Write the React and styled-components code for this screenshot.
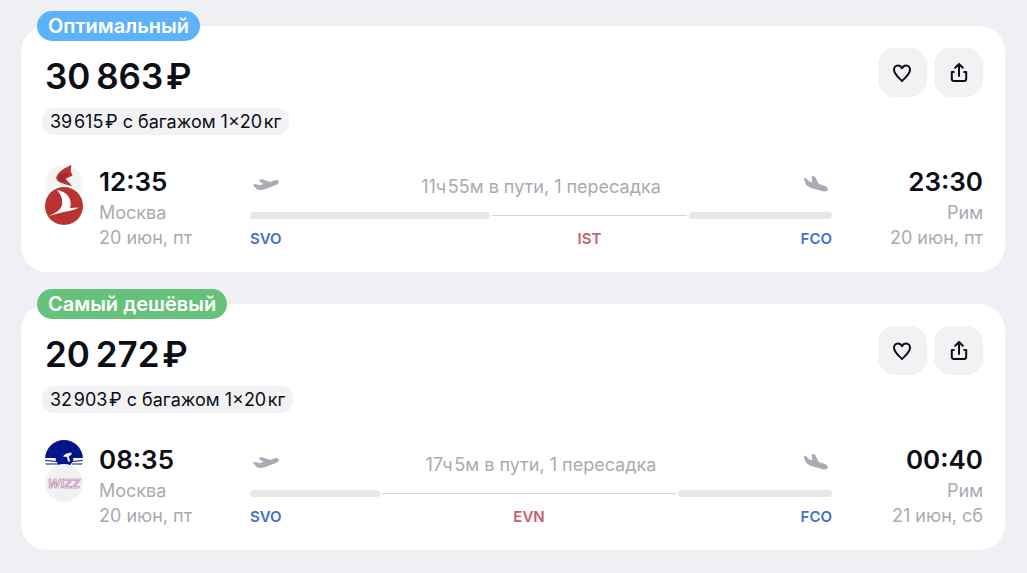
import React, { useState } from 'react';
import styled, { createGlobalStyle, ThemeProvider } from 'styled-components';

const theme = {
  colors: {
    page: '#eff0f4',
    card: '#ffffff',
    black: '#0c0e16',
    gray: '#a8abb2',
    icon: '#a9acb5',
    soft: '#f2f2f4',
    bar: '#e6e8e8',
    line: '#d3d5d7',
    blue: '#446fd0',
    red: '#c5616d',
  },
};

const GlobalStyle = createGlobalStyle`
  * {
    box-sizing: border-box;
  }
  body {
    margin: 0;
    background: ${theme.colors.page};
    color: ${theme.colors.black};
    font-family: Inter, 'Noto Sans', sans-serif;
  }
`;

const TicketList = styled.main`
  display: flex;
  flex-direction: column;
  gap: 32px;
  padding: 26px 22px 23px 21px;
`;

const Card = styled.article`
  position: relative;
  padding: 22px 22px 22px 21px;
  border-radius: 26px;
  background: ${(props) => props.theme.colors.card};
`;

const Badge = styled.span`
  position: absolute;
  top: -15px;
  left: 16px;
  padding: 0 11px;
  border-radius: 15px;
  background: ${({ $color }) => $color};
  color: ${(props) => props.theme.colors.card};
  font-size: 20px;
  font-weight: 600;
  line-height: 30px;
`;

const Header = styled.header`
  display: flex;
  justify-content: space-between;
  align-items: flex-start;
`;

const Price = styled.h2`
  margin: 6px 0 10px;
  padding-left: 3px;
  font-size: 35px;
  font-weight: 600;
  line-height: 44px;
`;

const Baggage = styled.p`
  width: fit-content;
  margin: 0;
  padding: 0 8px;
  border-radius: 12px;
  background: ${(props) => props.theme.colors.soft};
  font-size: 18px;
  line-height: 27px;
`;

const Actions = styled.div`
  display: flex;
  gap: 7px;
`;

const ActionButton = styled.button`
  display: flex;
  align-items: center;
  justify-content: center;
  width: 49px;
  height: 49px;
  padding: 0;
  border: none;
  border-radius: 17px;
  background: ${(props) => props.theme.colors.soft};
  color: ${(props) => props.theme.colors.black};
  cursor: pointer;
`;

const Flight = styled.div`
  display: grid;
  grid-template-columns: 38px 135px 1fr 135px;
  column-gap: 16px;
  align-items: start;
  margin-top: 27px;
  padding-left: 3px;
`;

const Point = styled.div`
  color: ${(props) => props.theme.colors.gray};
  font-size: 18px;
  line-height: 25px;
  text-align: ${({ $align }) => $align || 'left'};
`;

const Time = styled.div`
  margin: 4px 0 2px;
  color: ${(props) => props.theme.colors.black};
  font-size: 26px;
  font-weight: 600;
  line-height: 32px;
`;

const Route = styled.div`
  padding-top: 13px;
`;

const RouteTop = styled.div`
  display: flex;
  justify-content: space-between;
  padding: 0 3px;
  color: ${(props) => props.theme.colors.gray};
  font-size: 18px;
  line-height: 24px;

  svg {
    color: ${(props) => props.theme.colors.icon};
  }
`;

const Segments = styled.div`
  display: grid;
  grid-template-columns: ${({ $columns }) => $columns};
  column-gap: 2px;
  row-gap: 10px;
  align-items: center;
  margin-top: 13px;
`;

const Leg = styled.span`
  height: 7px;
  border-radius: 4px;
  background: ${(props) => props.theme.colors.bar};
`;

const Layover = styled.span`
  height: 1px;
  background: ${(props) => props.theme.colors.line};
`;

const Code = styled.span`
  color: ${({ theme: t, $transfer }) => ($transfer ? t.colors.red : t.colors.blue)};
  font-size: 15px;
  font-weight: 600;
  line-height: 20px;
  text-align: ${({ $align }) => $align};
`;

const HeartIcon = () => (
  <svg width="22" height="22" viewBox="1 0 22 22" fill="none" stroke="currentColor" strokeWidth="2" strokeLinejoin="round">
    <path d="M11 19C8.6 16.4 3 12.4 3 7.8C3 5.2 4.7 3.4 6.9 3.4C8.8 3.4 10.2 4.5 11 6.2C11.8 4.5 13.2 3.4 15.1 3.4C17.3 3.4 19 5.2 19 7.8C19 12.4 13.4 16.4 11 19Z" />
  </svg>
);

const ShareIcon = () => (
  <svg
    width="22"
    height="22"
    viewBox="0 0 22 22"
    fill="none"
    stroke="currentColor"
    strokeWidth="2"
    strokeLinecap="round"
    strokeLinejoin="round"
  >
    <path d="M11 14V2.5M7.2 5.8L11 2L14.8 5.8" />
    <path d="M5.8 10H3.8V16.5Q3.8 19 6 19H16Q18.2 19 18.2 16.5V10H16.2" />
  </svg>
);

const TakeoffIcon = () => (
  <svg width="26" height="20" viewBox="0 0 26 20" fill="currentColor">
    <path d="M0.4 10.4Q0 9.1 1.5 9L3.5 9.2L6.5 10.2L10.5 9L6.3 6Q5.6 5 7 4.6L9.5 4.3L17 7L21.5 5.2Q25.3 4.2 25.9 6.4Q26.2 8.4 23.5 9.8L12.5 13.9Q6 15.9 3.6 14Z" />
  </svg>
);

const LandingIcon = () => (
  <svg width="26" height="20" viewBox="0 0 26 20" fill="currentColor">
    <path d="M1 4.200Q0.700 2.700 2.300 3L3.800 3.700L6 6.500L9.300 7.200L8.700 2.100Q8.800 0.800 10.200 1.100L12.300 2.100L15.800 8.900L21.500 10.700Q25.300 12.200 24.900 14.800Q24.200 17.100 21 16.500L8 12.900Q4 11.500 2.800 9.300Z" />
  </svg>
);

const TurkishLogo = () => (
  <svg width="38" height="63" viewBox="0 -3 38 63" role="img" aria-label="Turkish Airlines">
    <circle cx="19" cy="19" r="19" fill="#f5f4f4" />
    <circle cx="19" cy="41" r="20" fill="#fff" />
    <path d="M26.5 0C22 2 13 6 11.2 12.5C11 17 18 19 27 21C25.5 18 21.5 16 21 14C22 12 26 12 27.5 10.5C25.5 7 25.3 4 26.5 0Z" fill="#b83332" />
    <path d="M13.500 12Q17 8 22 8.500L24 12Q20.500 12 20 14.500L21 17Q14 17 13.500 12Z" fill="#a82b2b" />
    <g fill="#7d1b1c">
      <circle cx="15" cy="11" r="0.7" />
      <circle cx="18" cy="9.5" r="0.7" />
      <circle cx="21" cy="9.5" r="0.7" />
      <circle cx="14.5" cy="14" r="0.7" />
      <circle cx="17.5" cy="12.5" r="0.7" />
      <circle cx="17.5" cy="15.5" r="0.7" />
    </g>
    <circle cx="19" cy="41" r="19" fill="#b83332" />
    <path d="M11.5 25C22 26 27.5 34 25.2 43L33.5 42.6C29 46 20 46.5 13 48.5L3.5 51C11 48 15.500 45 17 40C18 34 16 29 11.5 25Z" fill="#fff" />
  </svg>
);

const WizzLogo = () => (
  <svg width="38" height="63" viewBox="0 0 38 63" role="img" aria-label="Wizz Air">
    <clipPath id="topLogo">
      <circle cx="19" cy="19" r="19" />
    </clipPath>
    <g clipPath="url(#topLogo)">
      <rect width="38" height="19" fill="#04158a" />
      <rect y="18" width="38" height="20" fill="#fff" />
      <path d="M0 20.500L13 21.500M0 24L13 24M38 20.500L27 21.500M38 24L27 24" stroke="#04158a" strokeWidth="1.2" />
      <circle cx="19.500" cy="18" r="9" fill="#04158a" />
      <path d="M18 16.500Q20 13 26.500 12.500L26.300 15L23.800 16L25 21.500L23 21.500L22 17Z" fill="#fff" />
    </g>
    <circle cx="19" cy="43" r="19" fill="#f1f1f4" />
    <text
      x="19"
      y="48"
      textAnchor="middle"
      fontFamily="'Liberation Sans', sans-serif"
      fontSize="13"
      fontStyle="italic"
      fontWeight="700"
      fill="#f7eef3"
      stroke="#b5709c"
      strokeWidth="0.6"
    >
      WIZZ
    </text>
  </svg>
);

// \u2009 and \u200a are the thin and hair spaces inside numbers and units
const tickets = [
  {
    id: 1,
    badge: 'Оптимальный',
    badgeColor: '#5eb2fb',
    price: '30\u2009863\u200a₽',
    baggage: '39\u200a615\u200a₽ с багажом 1×20\u200aкг',
    Logo: TurkishLogo,
    departure: { time: '12:35', city: 'Москва', date: '20 июн, пт', code: 'SVO' },
    arrival: { time: '23:30', city: 'Рим', date: '20 июн, пт', code: 'FCO' },
    duration: '11ч\u200a55м в пути, 1 пересадка',
    transfer: 'IST',
    columns: '240fr 195fr 143fr',
  },
  {
    id: 2,
    badge: 'Самый дешёвый',
    badgeColor: '#66c27b',
    price: '20\u2009272\u200a₽',
    baggage: '32\u200a903\u200a₽ с багажом 1×20\u200aкг',
    Logo: WizzLogo,
    departure: { time: '08:35', city: 'Москва', date: '20 июн, пт', code: 'SVO' },
    arrival: { time: '00:40', city: 'Рим', date: '21 июн, сб', code: 'FCO' },
    duration: '17ч\u200a5м в пути, 1 пересадка',
    transfer: 'EVN',
    columns: '130fr 294fr 154fr',
  },
];

const Ticket = ({ ticket }) => {
  const { badge, badgeColor, price, baggage, Logo, departure, arrival, duration, transfer, columns } = ticket;
  const [isLiked, setIsLiked] = useState(false);

  return (
    <Card>
      <Badge $color={badgeColor}>{badge}</Badge>
      <Header>
        <div>
          <Price>{price}</Price>
          <Baggage>{baggage}</Baggage>
        </div>
        <Actions>
          <ActionButton type="button" aria-label="В избранное" aria-pressed={isLiked} onClick={() => setIsLiked(!isLiked)}>
            <HeartIcon />
          </ActionButton>
          <ActionButton type="button" aria-label="Поделиться">
            <ShareIcon />
          </ActionButton>
        </Actions>
      </Header>

      <Flight>
        <Logo />
        <Point>
          <Time>{departure.time}</Time>
          <div>{departure.city}</div>
          <div>{departure.date}</div>
        </Point>
        <Route>
          <RouteTop>
            <TakeoffIcon />
            <span>{duration}</span>
            <LandingIcon />
          </RouteTop>
          <Segments $columns={columns}>
            <Leg />
            <Layover />
            <Leg />
            <Code $align="left">{departure.code}</Code>
            <Code $align="center" $transfer>
              {transfer}
            </Code>
            <Code $align="right">{arrival.code}</Code>
          </Segments>
        </Route>
        <Point $align="right">
          <Time>{arrival.time}</Time>
          <div>{arrival.city}</div>
          <div>{arrival.date}</div>
        </Point>
      </Flight>
    </Card>
  );
};

const App = () => (
  <ThemeProvider theme={theme}>
    <GlobalStyle />
    <TicketList>
      {tickets.map((ticket) => (
        <Ticket key={ticket.id} ticket={ticket} />
      ))}
    </TicketList>
  </ThemeProvider>
);

export default App;
